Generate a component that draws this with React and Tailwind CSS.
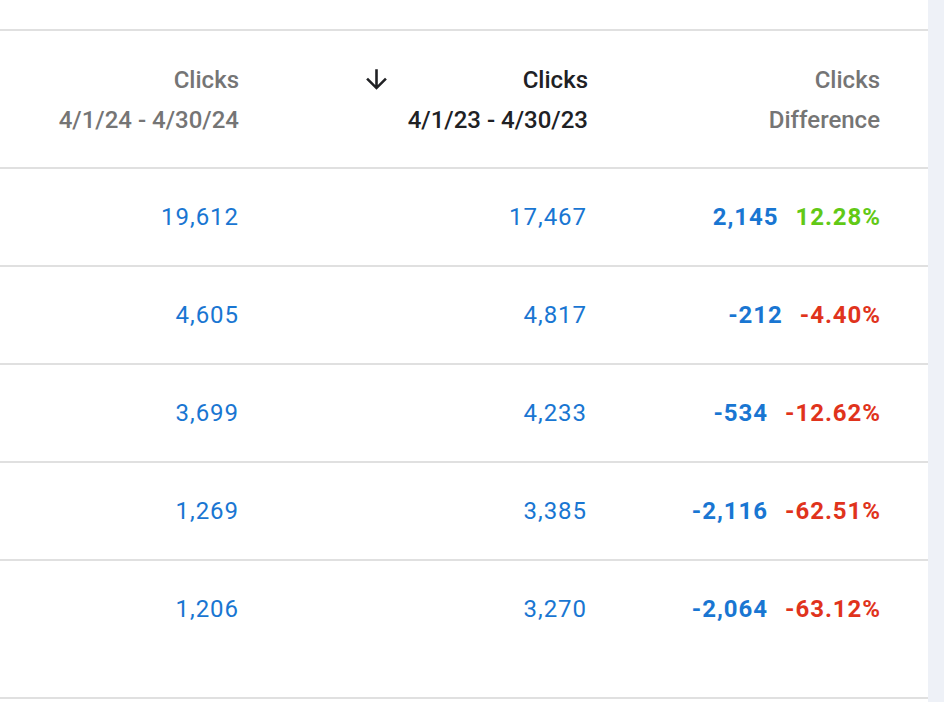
import React from "react";

const rows = [
  { a: "19,612", b: "17,467", diff: "2,145", pct: "12.28%", up: true },
  { a: "4,605", b: "4,817", diff: "-212", pct: "-4.40%", up: false },
  { a: "3,699", b: "4,233", diff: "-534", pct: "-12.62%", up: false },
  { a: "1,269", b: "3,385", diff: "-2,116", pct: "-62.51%", up: false },
  { a: "1,206", b: "3,270", diff: "-2,064", pct: "-63.12%", up: false },
];

function ArrowDown() {
  return (
    <svg viewBox="0 0 24 24" className="w-[31px] h-[31px] fill-[#202124]">
      <path d="M20 12l-1.41-1.41L13 16.17V4h-2v12.17l-5.58-5.59L4 12l8 8 8-8z" />
    </svg>
  );
}

export default function App() {
  return (
    <div className="w-[944px] h-[702px] bg-[#eef1f7] flex font-['Roboto',sans-serif] overflow-hidden">
      <div className="w-[928px] bg-white">
        <div className="h-[29px]" />
        {/* header */}
        <div className="border-y-2 border-[#e0e0e0] h-[140px] flex items-center pt-[2px] pr-[48px] text-[24px] font-medium">
          <div className="w-[239px] text-right text-[#757575] leading-[40px]">
            <div>Clicks</div>
            <div>4/1/24 - 4/30/24</div>
          </div>
          <div className="w-[349px] flex justify-between items-start text-[#202124] leading-[40px]">
            <div className="pl-[122px] pt-[4px]">
              <ArrowDown />
            </div>
            <div className="text-right">
              <div>Clicks</div>
              <div>4/1/23 - 4/30/23</div>
            </div>
          </div>
          <div className="flex-1 text-right text-[#757575] leading-[40px]">
            <div>Clicks</div>
            <div>Difference</div>
          </div>
        </div>
        {rows.map((r, i) => (
          <div
            key={i}
            className={
              "border-b-2 border-[#e0e0e0] flex pr-[48px] text-[24px] " +
              (i === rows.length - 1 ? "h-[138px] pt-[30px]" : "h-[98px] items-center")
            }
          >
            <div className="w-[239px] text-right text-[#1976d2] tracking-[0.04em] -mr-[1px]">{r.a}</div>
            <div className="w-[349px] text-right text-[#1976d2] tracking-[0.04em] -mr-[1px]">{r.b}</div>
            <div className="flex-1 flex justify-end gap-[17px] font-bold tracking-[0.04em] -mr-[1px]">
              <span className="text-[#1976d2]">{r.diff}</span>
              <span className={r.up ? "text-[#62c916]" : "text-[#e0331c]"}>{r.pct}</span>
            </div>
          </div>
        ))}
      </div>
    </div>
  );
}
